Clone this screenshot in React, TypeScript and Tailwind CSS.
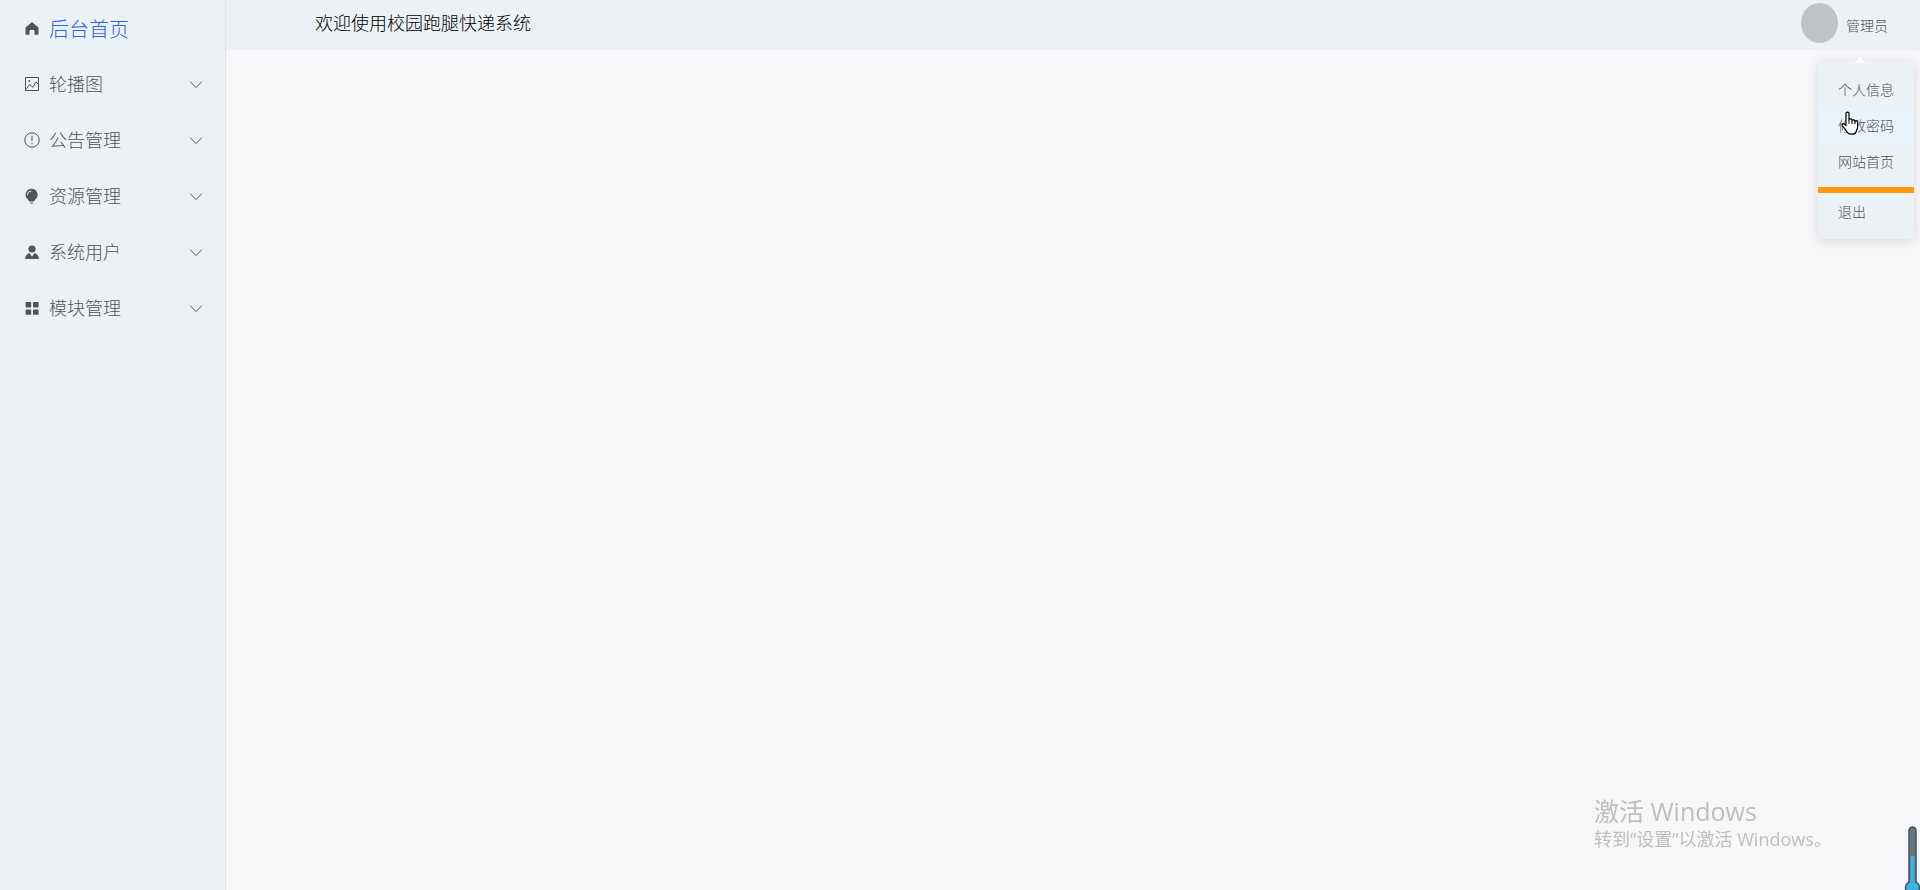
import type { ReactNode } from 'react';

function HomeIcon() {
  return (
    <svg viewBox="0 0 16 16" className="size-4 fill-current" aria-hidden="true">
      <path d="M8.6 2.6a.9.9 0 0 0-1.200 0L1.800 7.200c-.2.2-.3.4-.3.7v5.900c0 .6.4 1 1 1h3V11c0-.6.4-1 1-1h3c.6 0 1 .4 1 1v3.800h3c.6 0 1-.4 1-1V7.900c0-.3-.1-.5-.3-.7L8.600 2.600z" />
    </svg>
  );
}

function PictureIcon() {
  return (
    <svg viewBox="0 0 16 16" className="size-4 fill-none stroke-current" aria-hidden="true">
      <rect x="1.500" y="1.500" width="13" height="13" />
      <path d="M2 13.500 5.700 8.500l3.200 2.700 3-5.200 2.600 2.500" />
      <circle cx="5.300" cy="5" r="1" className="fill-current stroke-none" />
    </svg>
  );
}

function WarningIcon() {
  return (
    <svg viewBox="0 0 16 16" className="size-4 fill-none stroke-current" aria-hidden="true">
      <circle cx="8" cy="8" r="7.200" />
      <path d="M8 3.800v5.200M8 10.600v1.600" />
    </svg>
  );
}

function BulbIcon() {
  return (
    <svg viewBox="0 0 16 16" className="size-4 fill-current" aria-hidden="true">
      <path d="M7.600.8a6 6 0 0 0-3.700 10.700c.7.600 1.100 1.200 1.300 2h4.800c.2-.8.600-1.400 1.300-2A6 6 0 0 0 7.600.8zM4 7.200H3.100C3 4.600 4.800 2.700 7.300 2.600v.9C5.300 3.700 4 5.100 4 7.200z" />
      <rect x="6" y="14.500" width="3.200" height="1" rx=".5" />
    </svg>
  );
}

function UserIcon() {
  return (
    <svg viewBox="0 0 16 16" className="size-4 fill-current" aria-hidden="true">
      <circle cx="8" cy="5" r="3.600" />
      <path d="M5.300 9 8 12.400 10.700 9c2.400.8 4 2.700 4.200 5.900H1.100c.2-3.200 1.800-5.100 4.200-5.900z" />
    </svg>
  );
}

function GridIcon() {
  return (
    <svg viewBox="0 0 16 16" className="size-4 fill-current" aria-hidden="true">
      <rect x="1.600" y="2" width="5.600" height="5.400" rx=".6" />
      <rect x="9" y="2" width="5.600" height="5.400" rx=".6" />
      <rect x="1.600" y="9.400" width="5.600" height="5.400" rx=".6" />
      <rect x="9" y="9.400" width="5.600" height="5.400" rx=".6" />
    </svg>
  );
}

function ChevronIcon() {
  return (
    <svg viewBox="0 0 14 14" className="size-[14px] fill-none stroke-current" aria-hidden="true">
      <path d="m1 4.500 6 6 6-6" />
    </svg>
  );
}

const menus: { label: string; icon: ReactNode }[] = [
  { label: '轮播图', icon: <PictureIcon /> },
  { label: '公告管理', icon: <WarningIcon /> },
  { label: '资源管理', icon: <BulbIcon /> },
  { label: '系统用户', icon: <UserIcon /> },
  { label: '模块管理', icon: <GridIcon /> },
];

function Sidebar() {
  return (
    <nav aria-label="后台菜单" className="w-[226px] shrink-0 border-r border-[#e1e5e8] bg-[#ebf1f5] text-[#515557]">
      <a href="#home" className="flex h-14 items-center gap-[9px] pl-6">
        <HomeIcon />
        <span className="pt-[2px] text-xl text-[#3063e0]">后台首页</span>
      </a>
      {menus.map((menu) => (
        <button key={menu.label} type="button" aria-expanded="false" className="flex h-14 w-full items-center gap-[9px] pr-[22px] pl-6">
          {menu.icon}
          <span className="flex-1 pb-[3px] text-left text-lg">{menu.label}</span>
          <ChevronIcon />
        </button>
      ))}
    </nav>
  );
}

function UserMenu() {
  return (
    <div role="menu" className="absolute top-[61px] right-[6px] z-10 w-24 rounded bg-[#ebf1f5] py-[10px] text-sm text-[#4f5257] shadow-[0_2px_12px_rgba(0,0,0,0.12)]">
      <svg viewBox="0 0 12 6" className="absolute -top-1 left-9 h-[6px] w-3 fill-white" aria-hidden="true">
        <path d="M0 6 6 0l6 6z" />
      </svg>
      <button type="button" role="menuitem" className="block h-9 w-full px-5 text-left">个人信息</button>
      <button type="button" role="menuitem" className="block h-9 w-full bg-[#e8f3fe] px-5 text-left">修改密码</button>
      <button type="button" role="menuitem" className="block h-9 w-full px-5 text-left">网站首页</button>
      <div className="mt-2 h-[6px] bg-[#ff9a08]" />
      <button type="button" role="menuitem" className="block h-9 w-full px-5 text-left">退出</button>
    </div>
  );
}

function HandCursor() {
  return (
    <svg viewBox="0 0 18 24" className="absolute top-[111px] right-[61px] z-20 h-6 w-[18px]" aria-hidden="true">
      <path
        d="M5 14.500V2.600C5 .7 8 .7 8 2.600v6.200c0-1.500 3-1.300 3 .3v.6c0-1.400 2.900-1.100 2.900.3v.7c0-1.300 2.700-1 2.700.5v5c0 1.700-1.100 2.600-1.400 4.200-.7 1.700-1.900 2.800-4 2.800H9.600c-2 0-2.900-1-3.800-2.600-1.100-2-2.500-3.700-4.300-5.500-1.400-1.400.5-3.200 2-1.900z"
        className="fill-white stroke-black"
        strokeWidth="1.200"
        strokeLinejoin="round"
      />
      <path d="M8 8.800v4M11 9.700v3.300M13.900 10.700v2.500" className="fill-none stroke-black" />
    </svg>
  );
}

function Thermometer() {
  return (
    <svg viewBox="0 0 16 64" className="fixed right-0 bottom-0 h-16 w-4" aria-hidden="true">
      <circle cx="8.500" cy="62" r="7" className="fill-[#35b6e6] stroke-[#48545b]" strokeWidth="1.500" />
      <path d="M5 56V4.500a3.500 3.500 0 0 1 7 0V56" className="fill-[#68757d] stroke-[#48545b]" strokeWidth="1.500" />
      <rect x="6.500" y="30" width="4" height="30" className="fill-[#35b6e6]" />
    </svg>
  );
}

export default function App() {
  return (
    <div className="flex min-h-screen bg-[#f7f7f9] font-['Noto_Sans_CJK_SC',sans-serif] font-light">
      <Sidebar />
      <div className="flex-1">
        <header className="relative flex h-[50px] items-start justify-between bg-[#ebf1f5] pr-8 pl-[89px]">
          <h1 className="pt-2 text-lg leading-7 text-black">欢迎使用校园跑腿快递系统</h1>
          <button type="button" aria-haspopup="menu" aria-expanded="true" className="flex items-center gap-2 pt-[3px] text-sm text-[#4f5257]">
            <span className="h-10 w-[37px] rounded-[50%] bg-[#bfc3c8]" />
            <span className="pt-1">管理员</span>
          </button>
          <UserMenu />
          <HandCursor />
        </header>
        <main />
      </div>
      <aside className="fixed right-[90px] bottom-[39px] w-[236px] font-['Open_Sans','Noto_Sans_CJK_SC',sans-serif] font-normal whitespace-nowrap text-[#bdbec0]">
        <p className="text-[25px] leading-8">激活 Windows</p>
        <p className="text-lg leading-6">转到“设置”以激活 Windows。</p>
      </aside>
      <Thermometer />
    </div>
  );
}
